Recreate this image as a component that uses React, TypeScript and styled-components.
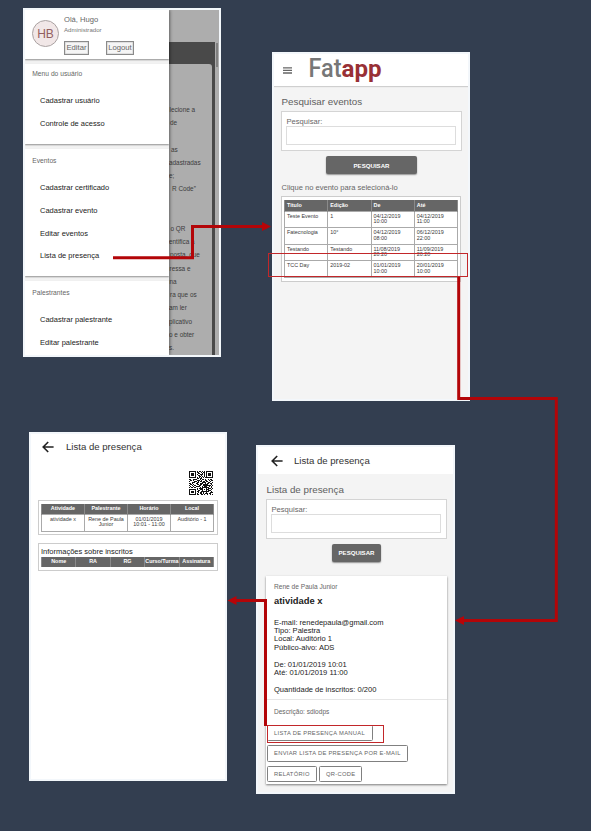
import React from "react";
import styled, { createGlobalStyle } from "styled-components";

const GlobalStyle = createGlobalStyle`
  *, *::before, *::after { box-sizing: border-box; }
  body { margin: 0; background: #333e50; font-family: "Liberation Sans", Arial, sans-serif; }
`;

const Canvas = styled.main`
  position: relative;
  width: 591px;
  height: 831px;
  overflow: hidden;
  background: #333e50;
`;

const Screen = styled.section<{ $x: number; $y: number; $w?: number; $bg?: string }>`
  position: absolute;
  left: ${(p) => p.$x}px;
  top: ${(p) => p.$y}px;
  width: ${(p) => p.$w ?? 198}px;
  height: 349px;
  overflow: hidden;
  border: 2px solid #f3f7fb;
  background: ${(p) => p.$bg ?? "#f4f4f4"};
  color: #333;
`;

/* ---------- side menu ---------- */

const Backdrop = styled.div`
  height: 100%;
  display: flex;
  flex-direction: column;
  background: #adadad;
`;
const DimHeader = styled.div`
  height: 32px;
  flex: none;
`;
const DimPage = styled.div`
  position: relative;
  flex: 1;
  margin-right: 4px;
  padding: 22px 3px 0 0;
  background: #494949;
`;
const DimCard = styled.div`
  height: 100%;
  padding: 39px 0 0 144px;
  border-radius: 0 3px 0 0;
  background: #adadad;
`;
const DimLine = styled.div<{ $indent: number }>`
  height: 13.22px;
  padding-left: ${(p) => p.$indent}px;
  white-space: nowrap;
  font-size: 6.4px;
  line-height: 13.22px;
  color: #3c3c3c;
`;
const ScrollThumb = styled.div`
  position: absolute;
  right: -3px;
  top: 1px;
  width: 2px;
  height: 24px;
  background: #808080;
`;
const Drawer = styled.aside`
  position: absolute;
  left: 0;
  top: 0;
  width: 144px;
  height: 345px;
  display: flex;
  flex-direction: column;
  gap: 5px;
  overflow: hidden;
  background: #f2f2f2;
  box-shadow: 1px 0 3px rgba(0, 0, 0, 0.45);
`;
const Profile = styled.header`
  display: flex;
  flex: none;
  height: 49px;
  padding: 5px 0 0 7px;
  background: #fff;
  box-shadow: 0 1px 1.5px rgba(0, 0, 0, 0.4);
`;
const Avatar = styled.div`
  width: 27px;
  height: 27px;
  margin: 5px 5px 0 0;
  border: 1px solid #aaa2a2;
  border-radius: 50%;
  background: #f1e7e7;
  color: #926060;
  font-size: 12px;
  line-height: 26px;
  text-align: center;
`;
const Greeting = styled.div`
  height: 9px;
  font-size: 7.6px;
  line-height: 9px;
  color: #666;
`;
const Role = styled.div`
  margin-top: 1px;
  font-size: 6.1px;
  line-height: 9px;
  color: #777;
`;
const ProfileActions = styled.div`
  display: flex;
  gap: 17px;
  margin-top: 7px;
`;
const SmallButton = styled.button<{ $w: number }>`
  width: ${(p) => p.$w}px;
  height: 14px;
  padding: 0;
  border: 1px solid #8a8a8a;
  background: #f5f5f5;
  box-shadow: inset 0 0 0 0.5px #ccc;
  color: #666;
  font: 7.7px/12px "Liberation Sans", sans-serif;
  white-space: nowrap;
`;
const MenuGroup = styled.nav<{ $h: number; $top: number }>`
  flex: none;
  height: ${(p) => p.$h}px;
  padding-top: ${(p) => p.$top}px;
  background: #fff;
  box-shadow: 0 1px 1.5px rgba(0, 0, 0, 0.4);
`;
const MenuTitle = styled.div`
  margin-bottom: 11px;
  padding-left: 7.3px;
  font-size: 6.7px;
  line-height: 10px;
  color: #666;
`;
const MenuItem = styled.div`
  height: 22.75px;
  padding-left: 15px;
  font-size: 7.5px;
  line-height: 22.75px;
  color: #222;
`;

/* ---------- shared pieces ---------- */

const LogoBar = styled.header`
  display: flex;
  height: 32px;
  margin-bottom: 10px;
  background: #fff;
  box-shadow: 0 1px 1px #cfcfcf;
`;
const TitleBar = styled.header<{ $pad: number; $h: number; $gap?: number }>`
  display: flex;
  align-items: center;
  gap: ${(p) => p.$gap ?? 11}px;
  height: ${(p) => p.$h}px;
  padding: 0 0 0 ${(p) => p.$pad}px;
  background: #fff;
  color: #333;
  font-size: 9.6px;
`;
const Heading = styled.h1`
  margin: 0 0 4px 7.5px;
  font-size: 9.8px;
  font-weight: 400;
  line-height: 11px;
  color: #606060;
`;
const PageBody = styled.div<{ $top?: number; $left?: number }>`
  padding: ${(p) => p.$top ?? 0}px 0 0 ${(p) => p.$left ?? 0}px;
`;
const SearchPanel = styled.div`
  width: 181px;
  height: 40px;
  margin-left: 7px;
  padding: 5px 5px 0 4px;
  border: 1px solid #d4d4d4;
  background: #fff;
`;
const Label = styled.label`
  display: block;
  height: 9px;
  padding-left: 0.5px;
  font-size: 7.6px;
  line-height: 10px;
  color: #666;
`;
const Field = styled.div`
  height: 19px;
  border: 1px solid #ddd;
  background: #fff;
`;
const SearchButton = styled.button<{ $w: number; $left: number }>`
  display: block;
  width: ${(p) => p.$w}px;
  height: 18px;
  margin: 5px 0 0 ${(p) => p.$left}px;
  padding: 0;
  border: 0;
  border-radius: 2px;
  background: #666;
  box-shadow: 0 1px 1.5px rgba(0, 0, 0, 0.4);
  color: #fff;
  font: bold 6.1px/17px "Liberation Sans", sans-serif;
`;
const Hint = styled.p`
  height: 9px;
  margin: 9px 0 4px 7.5px;
  font-size: 7.55px;
  line-height: 9px;
  color: #666;
`;
const TableFrame = styled.div<{ $h: number; $pad: string; $mt?: number; $ml?: number }>`
  width: 180px;
  height: ${(p) => p.$h}px;
  margin: ${(p) => p.$mt ?? 0}px 0 0 ${(p) => p.$ml ?? 7}px;
  padding: ${(p) => p.$pad};
  border: 1px solid #ccc;
  background: #fff;
`;
const Grid = styled.table<{ $center?: boolean }>`
  width: 100%;
  border-collapse: collapse;
  table-layout: fixed;
  font-size: 5.4px;
  line-height: 5.5px;
  text-align: ${(p) => (p.$center ? "center" : "left")};
  color: #3a3a3a;
`;
const HeadCell = styled.th<{ $h: number; $center?: boolean }>`
  height: ${(p) => p.$h}px;
  padding: 0 ${(p) => (p.$center ? 0 : 2)}px;
  border: 1px solid #8a8a8a;
  border-width: 0 1px;
  background: #666;
  color: #fff;
  text-align: inherit;
  white-space: nowrap;
`;
const Cell = styled.td<{ $h: number; $center?: boolean }>`
  height: ${(p) => p.$h}px;
  padding: 2px ${(p) => (p.$center ? 0 : 2)}px 0;
  border: 1px solid #aaa;
  vertical-align: top;
  white-space: pre-line;
`;
const TableTitle = styled.div`
  height: 10px;
  font-size: 7.5px;
  line-height: 10px;
  color: #222;
`;
const QrRow = styled.div`
  display: flex;
  justify-content: flex-end;
  height: 25px;
  margin: 12px 12px 4px 0;
`;

/* ---------- activity card ---------- */

const Card = styled.article`
  width: 181px;
  height: 208px;
  margin: 14px 0 0 7px;
  padding-top: 6px;
  background: #fff;
  box-shadow: 0 1px 2px rgba(0, 0, 0, 0.5);
`;
const Speaker = styled.div`
  padding-left: 8px;
  font-size: 6.6px;
  line-height: 10px;
  color: #666;
`;
const Activity = styled.h2`
  margin: 3px 0 12px 8px;
  font-size: 9.4px;
  line-height: 12px;
  color: #222;
`;
const Details = styled.div`
  height: 81px;
  padding-left: 8px;
  border-bottom: 1px solid #e6e6e6;
  font-size: 7.55px;
  line-height: 8.45px;
  white-space: pre;
  color: #222;
`;
const Description = styled.div`
  padding: 7px 0 8px 8px;
  font-size: 6.55px;
  line-height: 10px;
  color: #666;
`;
const Actions = styled.div`
  display: flex;
  flex-wrap: wrap;
  gap: 4px 2px;
  padding-left: 1px;
`;
const OutlineButton = styled.button<{ $w: number; $after?: number }>`
  width: ${(p) => p.$w}px;
  height: 16.5px;
  margin-right: ${(p) => p.$after ?? 0}px;
  padding: 0 0 0 6px;
  border: 1px solid #808080;
  border-radius: 1.5px;
  background: #fff;
  color: #666;
  font: 5.8px/14.5px "Liberation Sans", sans-serif;
  letter-spacing: 0.29px;
  text-align: left;
  white-space: nowrap;
`;

const Overlay = styled.svg`
  position: absolute;
  left: 0;
  top: 0;
  pointer-events: none;
`;

const BackArrow = () => (
  <svg width="12" height="12" viewBox="0 0 12 12" fill="none" stroke="#222" strokeWidth="1.6">
    <path d="M11.6 6H1.5M6.2 1L1.2 6l5 5" />
  </svg>
);

const Logo = () => (
  <svg width="194" height="32" viewBox="0 0 194 32">
    <path d="M9 13.8h9M9 16.4h9M9 19h9" stroke="#666" strokeWidth="1.3" />
    <text y="22.8" fontFamily="Roboto, sans-serif" fontWeight="700" fontSize="24">
      <tspan x="34.5" fontSize="26" fontWeight="500" fill="#777" textLength="33" lengthAdjust="spacingAndGlyphs">Fat</tspan>
      <tspan fill="#983035" textLength="40" lengthAdjust="spacingAndGlyphs">app</tspan>
    </text>
  </svg>
);

const QR_ROWS = [
  "111111101011010101111111",
  "100000101100101101000001",
  "101110100110010101011101",
  "101110101001110101011101",
  "101110100110100101011101",
  "100000100011010101000001",
  "111111101010101011111111",
  "000000001101100000000000",
  "110011110001011010010110",
  "011010001110100011001011",
  "100001110101101101100100",
  "000111001100011110011001",
  "110100011001110010110110",
  "011010001101101111100010",
  "100101100011001111111101",
  "010010011110010111001010",
  "101101100001011111110010",
  "000000001011110001011101",
  "111111101001110101110010",
  "100000100110010001011100",
  "101110101100111111110010",
  "101110100101101001000111",
  "100000101001101011101100",
  "111111101100110100100101",
];
const QrCode = () => (
  <svg width="24" height="24" viewBox="0 0 24 24" shapeRendering="crispEdges">
    <path
      fill="#111"
      d={QR_ROWS.flatMap((row, y) => [...row].map((v, x) => (v === "1" ? `M${x} ${y}h1v1h-1z` : ""))).join("")}
    />
  </svg>
);

const dimLines: [string, number][] = [
  ["lecione a", 0.5], ["de", 1], ["", 0], ["as", 2], ["adastradas", 0], ["e;", 0], ["R Code”", 3],
  ["", 0], ["", 0], ["o QR", 1.5], ["entifica a", 0], ["posta, que", 1], ["ressa e", 0.5], ["na", 0.5],
  ["ra que os", 1], ["am ler", 0], ["plicativo", 0], ["o e obter", 0], ["s.", 0],
];

const events = [
  ["Teste Evento", "1", "04/12/2019\n10:00", "04/12/2019\n11:00"],
  ["Fatecnologia", "10°", "04/12/2019\n08:00", "06/12/2019\n22:00"],
  ["Testando", "Testando", "11/08/2019\n20:20", "11/09/2019\n20:20"],
  ["TCC Day", "2019-02", "01/01/2019\n10:00", "20/01/2019\n10:00"],
];

const details = `E-mail: renedepaula@gmail.com
Tipo: Palestra
Local: Auditório 1
Público-alvo: ADS

De: 01/01/2019 10:01
Até: 01/01/2019 11:00

Quantidade de inscritos: 0/200`;

const SearchBox = () => (
  <SearchPanel>
    <Label>Pesquisar:</Label>
    <Field />
  </SearchPanel>
);

const MenuScreen = () => (
  <Screen $x={23} $y={8}>
    <Backdrop>
      <DimHeader />
      <DimPage>
        <ScrollThumb />
        <DimCard>
          {dimLines.map(([text, indent], i) => (
            <DimLine key={i} $indent={indent}>{text}</DimLine>
          ))}
        </DimCard>
      </DimPage>
    </Backdrop>
    <Drawer>
      <Profile>
        <Avatar>HB</Avatar>
        <div>
          <Greeting>Olá, Hugo</Greeting>
          <Role>Administrador</Role>
          <ProfileActions>
            <SmallButton $w={25}>Editar</SmallButton>
            <SmallButton $w={28}>Logout</SmallButton>
          </ProfileActions>
        </div>
      </Profile>
      <MenuGroup $h={80} $top={5}>
        <MenuTitle>Menu do usuário</MenuTitle>
        <MenuItem>Cadastrar usuário</MenuItem>
        <MenuItem>Controle de acesso</MenuItem>
      </MenuGroup>
      <MenuGroup $h={127} $top={7}>
        <MenuTitle>Eventos</MenuTitle>
        <MenuItem>Cadastrar certificado</MenuItem>
        <MenuItem>Cadastrar evento</MenuItem>
        <MenuItem>Editar eventos</MenuItem>
        <MenuItem>Lista de presença</MenuItem>
      </MenuGroup>
      <MenuGroup $h={90} $top={7}>
        <MenuTitle>Palestrantes</MenuTitle>
        <MenuItem>Cadastrar palestrante</MenuItem>
        <MenuItem>Editar palestrante</MenuItem>
      </MenuGroup>
    </Drawer>
  </Screen>
);

const EventsScreen = () => (
  <Screen $x={272} $y={52}>
    <LogoBar><Logo /></LogoBar>
    <Heading>Pesquisar eventos</Heading>
    <SearchBox />
    <SearchButton $w={91} $left={52}>PESQUISAR</SearchButton>
    <Hint>Clique no evento para selecioná-lo</Hint>
    <TableFrame $h={86} $pad="3px 2px 0 2px">
      <Grid>
        <thead>
          <tr>{["Título", "Edição", "De", "Até"].map((t) => <HeadCell key={t} $h={11}>{t}</HeadCell>)}</tr>
        </thead>
        <tbody>
          {events.map((row) => (
            <tr key={row[0]}>{row.map((t, i) => <Cell key={i} $h={16.5}>{t}</Cell>)}</tr>
          ))}
        </tbody>
      </Grid>
    </TableFrame>
  </Screen>
);

const PrintScreen = () => (
  <Screen $x={29} $y={432} $bg="#fff">
    <TitleBar $pad={11} $h={25} $gap={12}><BackArrow />Lista de presença</TitleBar>
    <QrRow><QrCode /></QrRow>
    <TableFrame $h={35} $pad="3px 3px 0 2px">
      <Grid $center>
        <thead>
          <tr>{["Atividade", "Palestrante", "Horário", "Local"].map((t) => <HeadCell key={t} $h={10} $center>{t}</HeadCell>)}</tr>
        </thead>
        <tbody>
          <tr>
            {["atividade x", "Rene de Paula\nJunior", "01/01/2019\n10:01 - 11:00", "Auditório - 1"].map((t) => (
              <Cell key={t} $h={17} $center>{t}</Cell>
            ))}
          </tr>
        </tbody>
      </Grid>
    </TableFrame>
    <TableFrame $h={28} $pad="3px 3px 0 2px" $mt={8}>
      <TableTitle>Informações sobre inscritos</TableTitle>
      <Grid $center>
        <thead>
          <tr>{["Nome", "RA", "RG", "Curso/Turma", "Assinatura"].map((t) => <HeadCell key={t} $h={10} $center>{t}</HeadCell>)}</tr>
        </thead>
      </Grid>
    </TableFrame>
  </Screen>
);

const AttendanceScreen = () => (
  <Screen $x={256} $y={445} $w={199}>
    <TitleBar $pad={13} $h={27}><BackArrow />Lista de presença</TitleBar>
    <PageBody $top={9.5} $left={1}>
      <Heading>Lista de presença</Heading>
      <SearchBox />
      <SearchButton $w={49} $left={73}>PESQUISAR</SearchButton>
      <Card>
        <Speaker>Rene de Paula Junior</Speaker>
        <Activity>atividade x</Activity>
        <Details>{details}</Details>
        <Description>Descrição: sdiodps</Description>
        <Actions>
          <OutlineButton $w={106} $after={60}>LISTA DE PRESENÇA MANUAL</OutlineButton>
          <OutlineButton $w={141} $after={30}>ENVIAR LISTA DE PRESENÇA POR E-MAIL</OutlineButton>
          <OutlineButton $w={50}>RELATÓRIO</OutlineButton>
          <OutlineButton $w={43}>QR-CODE</OutlineButton>
        </Actions>
      </Card>
    </PageBody>
  </Screen>
);

const FlowArrows = () => (
  <Overlay width="591" height="831" viewBox="0 0 591 831">
    <g fill="none" stroke="#b30508" strokeWidth="3">
      <path d="M113 257.7H192.5V226.5H264" />
      <path d="M458.7 276V398.5H556.3V620.5H462" />
      <path d="M265.5 726V600.5H235" />
    </g>
    <g fill="#b80408">
      <path d="M262 222l9 4.5-9 4.5z" />
      <path d="M464 616l-9 4.5 9 4.5z" />
      <path d="M236.5 596l-9 4.5 9 4.5z" />
    </g>
    <g fill="none" stroke="#c2272a" strokeWidth="1">
      <rect x="268.5" y="253.5" width="199" height="23" />
      <rect x="267.5" y="725.5" width="116" height="17" />
    </g>
  </Overlay>
);

export default function App() {
  return (
    <>
      <GlobalStyle />
      <Canvas>
        <MenuScreen />
        <EventsScreen />
        <PrintScreen />
        <AttendanceScreen />
        <FlowArrows />
      </Canvas>
    </>
  );
}
